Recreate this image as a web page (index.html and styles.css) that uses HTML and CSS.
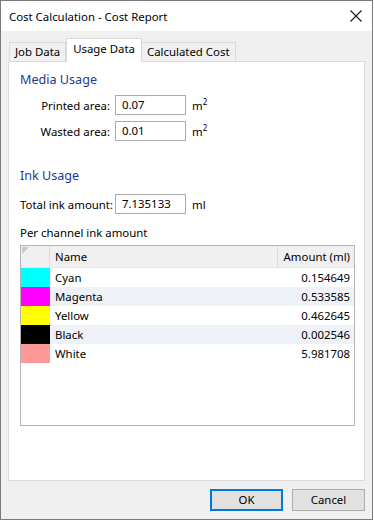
FILE: index.html
```html
<!DOCTYPE html>
<html>
<head>
<meta charset="utf-8">
<link rel="stylesheet" href="styles.css">
</head>
<body>
<div class="window">
  <div class="titlebar">
    <span class="title">Cost Calculation - Cost Report</span>
    <svg class="close" width="12" height="12" viewBox="0 0 12 12"><path d="M0.5 0.5 L11.5 11.5 M11.5 0.5 L0.5 11.5" stroke="#1a1a1a" stroke-width="1.1" fill="none"/></svg>
  </div>
  <div class="body">
    <div class="tabs">
      <div class="tab">Job Data</div>
      <div class="tab active">Usage Data</div>
      <div class="tab">Calculated Cost</div>
    </div>
    <div class="panel">
      <div class="heading h-media">Media Usage</div>
      <div class="field f-first">
        <span class="label">Printed area:</span>
        <span class="input">0.07</span>
        <span class="unit">m<sup>2</sup></span>
      </div>
      <div class="field f-second">
        <span class="label">Wasted area:</span>
        <span class="input">0.01</span>
        <span class="unit">m<sup>2</sup></span>
      </div>
      <div class="heading h-ink">Ink Usage</div>
      <div class="field f-ink">
        <span class="label left">Total ink amount:</span>
        <span class="input">7.135133</span>
        <span class="unit">ml</span>
      </div>
      <div class="caption">Per channel ink amount</div>
      <div class="grid">
        <div class="row head">
          <div class="cell sw corner"><span class="tri"></span></div>
          <div class="cell name">Name</div>
          <div class="cell amt">Amount (ml)</div>
        </div>
        <div class="row">
          <div class="cell sw c-cyan"></div>
          <div class="cell name">Cyan</div>
          <div class="cell amt">0.154649</div>
        </div>
        <div class="row alt">
          <div class="cell sw c-magenta"></div>
          <div class="cell name">Magenta</div>
          <div class="cell amt">0.533585</div>
        </div>
        <div class="row">
          <div class="cell sw c-yellow"></div>
          <div class="cell name">Yellow</div>
          <div class="cell amt">0.462645</div>
        </div>
        <div class="row alt">
          <div class="cell sw c-black"></div>
          <div class="cell name">Black</div>
          <div class="cell amt">0.002546</div>
        </div>
        <div class="row">
          <div class="cell sw c-white"></div>
          <div class="cell name">White</div>
          <div class="cell amt">5.981708</div>
        </div>
      </div>
    </div>
    <div class="buttons">
      <div class="btn default">OK</div>
      <div class="btn">Cancel</div>
    </div>
  </div>
</div>
</body>
</html>
```
FILE: styles.css
```css
html, body {
  margin: 0;
  padding: 0;
  background: #ffffff;
}
body {
  font-family: "Noto Sans", "Open Sans", sans-serif;
  font-size: 11.4px;
  color: #000;
}
.window {
  box-sizing: border-box;
  width: 373px;
  height: 520px;
  border: 1px solid #7a7a7a;
  background: #f0f0f0;
  display: flex;
  flex-direction: column;
}
.titlebar {
  height: 30px;
  background: #ffffff;
  display: flex;
  align-items: center;
  justify-content: space-between;
  padding: 0 10px 0 8px;
}
.title {
  font-size: 11.4px;
  color: #000;
}
.close {
  display: block;
}
.body {
  flex: 1;
  padding: 7px 7px 0 7px;
  display: flex;
  flex-direction: column;
}
.tabs {
  display: flex;
  align-items: flex-end;
  height: 23px;
  padding-left: 1px;
  position: relative;
  z-index: 1;
}
.tab {
  box-sizing: border-box;
  height: 19px;
  padding: 0 5px;
  border: 1px solid #d9d9d9;
  border-bottom: none;
  background: #f0f0f0;
  line-height: 18px;
}
.tab + .tab {
  border-left: none;
}
.tab.active {
  height: 24px;
  margin-bottom: -1px;
  background: #ffffff;
  border-left: 1px solid #d9d9d9;
  padding: 0 6px;
  line-height: 20px;
}
.panel {
  box-sizing: border-box;
  height: 420px;
  background: #ffffff;
  border: 1px solid #d9d9d9;
  padding: 0 9px 0 11px;
}
.heading {
  font-size: 12.6px;
  color: #1e3c87;
  line-height: 16px;
}
.h-media {
  margin-top: 10px;
}
.h-ink {
  margin-top: 27px;
}
.field {
  display: flex;
  align-items: center;
  height: 20px;
}
.f-first {
  margin-top: 7px;
}
.f-second {
  margin-top: 6px;
}
.f-ink {
  margin-top: 10px;
}
.label {
  width: 95px;
  text-align: right;
  padding-right: 5px;
  box-sizing: border-box;
  white-space: nowrap;
}
.label.left {
  text-align: left;
}
.input {
  box-sizing: border-box;
  width: 71px;
  height: 20px;
  border: 1px solid #ababab;
  padding-left: 6px;
  line-height: 18px;
}
.unit {
  margin-left: 6px;
}
.unit sup {
  font-size: 8px;
  vertical-align: 5px;
  line-height: 0;
}
.caption {
  margin-top: 11px;
  line-height: 16px;
}
.grid {
  box-sizing: border-box;
  margin-top: 4px;
  height: 181px;
  border: 1px solid #b4b4b4;
}
.row {
  display: flex;
  height: 19px;
  background: #ffffff;
}
.row.alt {
  background: #eef2f8;
}
.row.head {
  height: 22px;
  background: #f0f0f0;
}
.cell {
  box-sizing: border-box;
  line-height: 19px;
  white-space: nowrap;
}
.row.head .cell {
  line-height: 21px;
  border-right: 1px solid #dcdcdc;
  border-bottom: 1px solid #e5e5e5;
}
.sw {
  width: 29px;
}
.name {
  width: 228px;
  padding-left: 5px;
}
.amt {
  flex: 1;
  text-align: right;
  padding-right: 4px;
}
.row.head .amt {
  border-right: none;
}
.corner {
  position: relative;
}
.tri {
  position: absolute;
  top: 1px;
  left: 1px;
  width: 0;
  height: 0;
  border-top: 7px solid #c8c8c8;
  border-right: 7px solid transparent;
}
.c-cyan { background: #00ffff; }
.c-magenta { background: #ff00ff; }
.c-yellow { background: #ffff00; }
.c-black { background: #000000; }
.c-white { background: #ff9999; }
.buttons {
  display: flex;
  justify-content: flex-end;
  gap: 9px;
  margin-top: 8px;
}
.btn {
  box-sizing: border-box;
  width: 73px;
  height: 22px;
  border: 1px solid #adadad;
  background: #e1e1e1;
  text-align: center;
  line-height: 20px;
}
.btn.default {
  border: 2px solid #0078d7;
  line-height: 18px;
}
```
